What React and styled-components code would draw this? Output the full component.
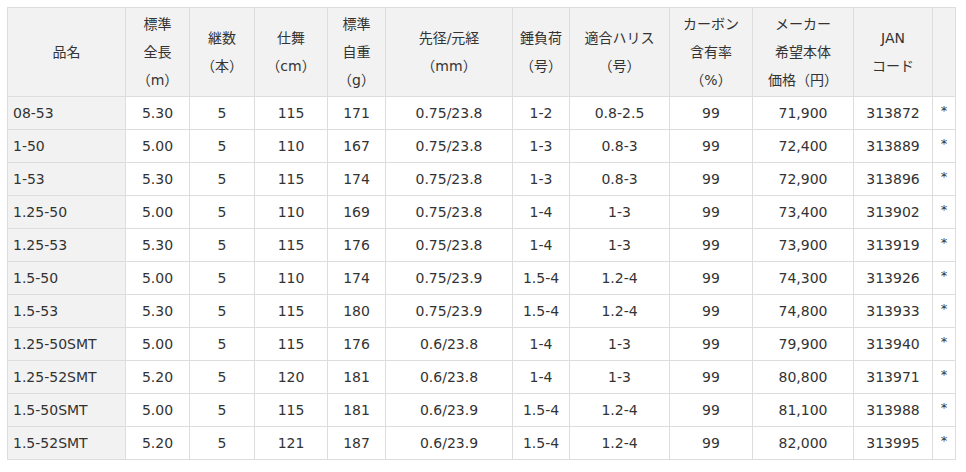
import React from "react";
import styled, { createGlobalStyle } from "styled-components";

const GlobalStyle = createGlobalStyle`
  html, body {
    margin: 0;
    padding: 0;
    background: #ffffff;
  }
`;

const Page = styled.div`
  padding: 7px 0 0 7px;
  font-family: "DejaVu Sans", "Noto Sans CJK JP", sans-serif;
  font-size: 14px;
  color: #333333;
`;

const Table = styled.table`
  width: 949px;
  table-layout: fixed;
  border-collapse: collapse;
`;

const HeadCell = styled.th`
  height: 88px;
  padding: 0;
  border: 1px solid #dddddd;
  background: #f2f2f2;
  font-weight: normal;
  line-height: 28px;
  text-align: center;
  vertical-align: middle;
`;

const Cell = styled.td`
  height: 32px;
  padding: ${(p) => (p.$name ? "0 0 0 5px" : "0")};
  border: 1px solid #dddddd;
  background: ${(p) => (p.$name ? "#f2f2f2" : "#ffffff")};
  text-align: ${(p) => (p.$name ? "left" : "center")};
  vertical-align: middle;
  white-space: nowrap;
`;

const Note = styled.span`
  display: inline-block;
  font-size: 13px;
  transform: translateY(-3px);
`;

const columns = [
  { width: 118, label: ["品名"] },
  { width: 64, label: ["標準", "全長", "（m）"] },
  { width: 65, label: ["継数", "（本）"] },
  { width: 73, label: ["仕舞", "（cm）"] },
  { width: 58, label: ["標準", "自重", "（g）"] },
  { width: 127, label: ["先径/元経", "（mm）"] },
  { width: 57, label: ["錘負荷", "（号）"] },
  { width: 100, label: ["適合ハリス", "（号）"] },
  { width: 83, label: ["カーボン", "含有率", "（%）"] },
  { width: 101, label: ["メーカー", "希望本体", "価格（円）"] },
  { width: 79, label: ["JAN", "コード"] },
  { width: 23, label: [] },
];

const rows = [
  ["08-53", "5.30", "5", "115", "171", "0.75/23.8", "1-2", "0.8-2.5", "99", "71,900", "313872"],
  ["1-50", "5.00", "5", "110", "167", "0.75/23.8", "1-3", "0.8-3", "99", "72,400", "313889"],
  ["1-53", "5.30", "5", "115", "174", "0.75/23.8", "1-3", "0.8-3", "99", "72,900", "313896"],
  ["1.25-50", "5.00", "5", "110", "169", "0.75/23.8", "1-4", "1-3", "99", "73,400", "313902"],
  ["1.25-53", "5.30", "5", "115", "176", "0.75/23.8", "1-4", "1-3", "99", "73,900", "313919"],
  ["1.5-50", "5.00", "5", "110", "174", "0.75/23.9", "1.5-4", "1.2-4", "99", "74,300", "313926"],
  ["1.5-53", "5.30", "5", "115", "180", "0.75/23.9", "1.5-4", "1.2-4", "99", "74,800", "313933"],
  ["1.25-50SMT", "5.00", "5", "115", "176", "0.6/23.8", "1-4", "1-3", "99", "79,900", "313940"],
  ["1.25-52SMT", "5.20", "5", "120", "181", "0.6/23.8", "1-4", "1-3", "99", "80,800", "313971"],
  ["1.5-50SMT", "5.00", "5", "115", "181", "0.6/23.9", "1.5-4", "1.2-4", "99", "81,100", "313988"],
  ["1.5-52SMT", "5.20", "5", "121", "187", "0.6/23.9", "1.5-4", "1.2-4", "99", "82,000", "313995"],
];

export default function App() {
  return (
    <Page>
      <GlobalStyle />
      <Table>
        <colgroup>
          {columns.map((col, i) => (
            <col key={i} style={{ width: col.width }} />
          ))}
        </colgroup>
        <thead>
          <tr>
            {columns.map((col, i) => (
              <HeadCell key={i}>
                {col.label.map((line, j) => (
                  <React.Fragment key={j}>
                    {j > 0 && <br />}
                    {line}
                  </React.Fragment>
                ))}
              </HeadCell>
            ))}
          </tr>
        </thead>
        <tbody>
          {rows.map((row) => (
            <tr key={row[10]}>
              {row.map((value, i) => (
                <Cell key={i} $name={i === 0}>
                  {value}
                </Cell>
              ))}
              <Cell>
                <Note>*</Note>
              </Cell>
            </tr>
          ))}
        </tbody>
      </Table>
    </Page>
  );
}
